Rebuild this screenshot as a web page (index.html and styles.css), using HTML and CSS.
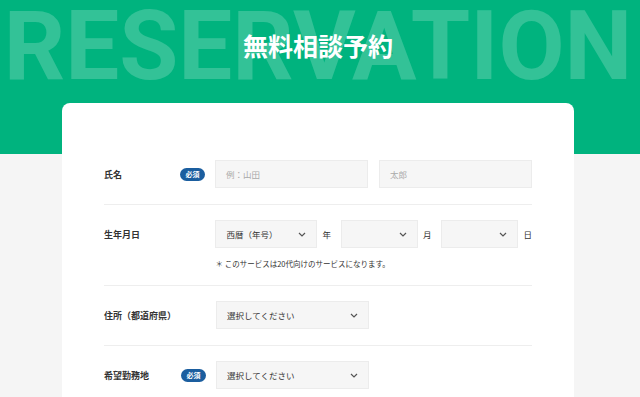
FILE: index.html
```html
<!DOCTYPE html>
<html lang="ja">
<head>
  <meta charset="UTF-8" />
  <meta name="viewport" content="width=device-width, initial-scale=1.0"/>
  <title>無料相談予約</title>
  <link rel="stylesheet" href="styles.css">
</head>
<body>

  <!-- Green header with the big watermark -->
  <div class="hero">
    <div class="hero-inner">
      <span class="watermark">RESERVATION</span>
      <h1 class="title">無料相談予約</h1>
    </div>
  </div>

  <div class="main">
    <div class="card">

      <div class="row">
        <div class="label">
          <span>氏名</span>
          <span class="badge">必須</span>
        </div>
        <div class="fields">
          <div class="input">例：山田</div>
          <div class="input">太郎</div>
        </div>
      </div>

      <div class="row top">
        <div class="label">
          <span>生年月日</span>
        </div>
        <div class="fields-col">
          <div class="fields">
            <div class="select era">
              <span>西暦（年号）</span>
              <svg width="8" height="5" viewBox="0 0 8 5"><path d="M1 1l3 3 3-3" fill="none" stroke="#555" stroke-width="1.2"/></svg>
            </div>
            <span class="unit">年</span>
            <div class="select small">
              <span></span>
              <svg width="8" height="5" viewBox="0 0 8 5"><path d="M1 1l3 3 3-3" fill="none" stroke="#555" stroke-width="1.2"/></svg>
            </div>
            <span class="unit">月</span>
            <div class="select small">
              <span></span>
              <svg width="8" height="5" viewBox="0 0 8 5"><path d="M1 1l3 3 3-3" fill="none" stroke="#555" stroke-width="1.2"/></svg>
            </div>
            <span class="unit last">日</span>
          </div>
          <p class="note">＊ このサービスは20代向けのサービスになります。</p>
        </div>
      </div>

      <div class="row">
        <div class="label">
          <span>住所（都道府県）</span>
        </div>
        <div class="fields">
          <div class="select">
            <span>選択してください</span>
            <svg width="8" height="5" viewBox="0 0 8 5"><path d="M1 1l3 3 3-3" fill="none" stroke="#555" stroke-width="1.2"/></svg>
          </div>
        </div>
      </div>

      <div class="row">
        <div class="label">
          <span>希望勤務地</span>
          <span class="badge">必須</span>
        </div>
        <div class="fields">
          <div class="select">
            <span>選択してください</span>
            <svg width="8" height="5" viewBox="0 0 8 5"><path d="M1 1l3 3 3-3" fill="none" stroke="#555" stroke-width="1.2"/></svg>
          </div>
        </div>
      </div>

    </div>
  </div>

</body>
</html>
```

FILE: styles.css
```css
body {
  margin: 0;
  background: #f5f5f5;
  font-family: "Noto Sans CJK JP", "Noto Sans", sans-serif;
  color: #333;
}

.hero {
  background: #00b37e;
  height: 154px;
}

.hero-inner {
  position: relative;
  margin-right: 4px;
  height: 100%;
  overflow: hidden;
}

.watermark {
  position: absolute;
  top: -2px;
  left: 0;
  right: 0;
  text-align: center;
  white-space: nowrap;
  font-family: Roboto, "Liberation Sans", sans-serif;
  font-weight: bold;
  font-size: 96px;
  line-height: 1;
  color: rgba(255, 255, 255, 0.2);
}

.title {
  position: relative;
  margin: 0;
  padding-top: 27px;
  text-align: center;
  font-size: 25px;
  line-height: 36px;
  font-weight: bold;
  color: #fff;
}

.main {
  margin: -51px 4px 0 0;
  position: relative;
}

.card {
  width: 428px;
  margin: 0 auto;
  background: #fff;
  border-radius: 8px;
  padding: 42px 42px 20px;
}

.row {
  display: flex;
  align-items: center;
  padding: 15px 0 16px;
  border-bottom: 1px solid #eeeeee;
}

.row.top {
  align-items: flex-start;
}

.label {
  width: 102px;
  margin-right: 10px;
  height: 28px;
  display: flex;
  align-items: center;
  justify-content: space-between;
  font-size: 9px;
  font-weight: bold;
}

.badge {
  background: #1b5e9f;
  color: #fff;
  font-size: 7px;
  line-height: 13px;
  height: 13px;
  padding: 0 5.5px;
  border-radius: 7px;
}

.fields {
  display: flex;
  align-items: center;
  gap: 11px;
}

.fields-col .fields {
  gap: 0;
}

.input,
.select {
  box-sizing: border-box;
  height: 28px;
  width: 153px;
  background: #f6f6f6;
  border: 1px solid #ececec;
  padding: 0 10px;
  display: flex;
  align-items: center;
  font-size: 8.5px;
}

.input {
  color: #aaa;
}

.select {
  justify-content: space-between;
  color: #333;
}

.select.era {
  width: 102px;
}

.select.small {
  width: 77px;
}

.unit {
  font-size: 8.5px;
  margin: 0 10px 0 5px;
}

.unit.last {
  margin-right: 0;
}

.note {
  margin: 10px 0 0;
  font-size: 7.5px;
  color: #333;
}
```
